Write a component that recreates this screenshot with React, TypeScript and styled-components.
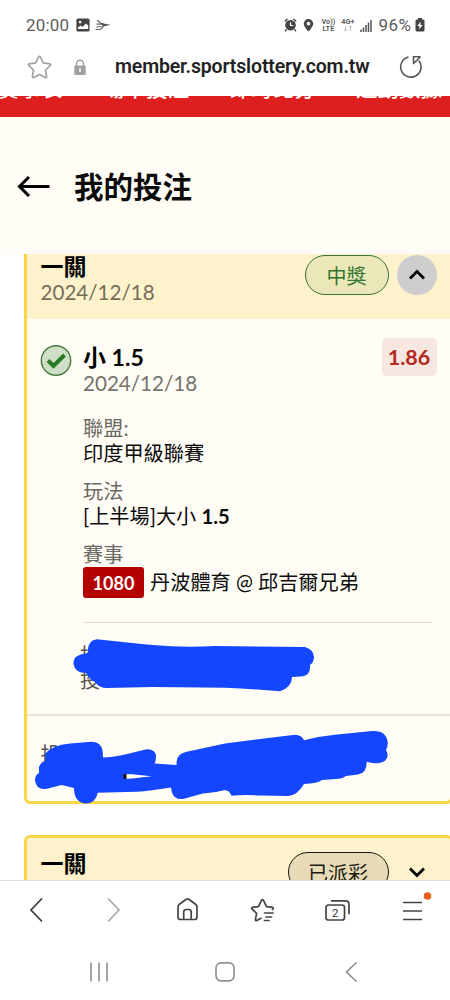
import React from "react";
import styled, { createGlobalStyle } from "styled-components";

const GlobalStyle = createGlobalStyle`
  * { box-sizing: border-box; }
  body { margin: 0; background: #fff; }
`;

const Screen = styled.div`
  width: 450px;
  height: 1000px;
  display: flex;
  flex-direction: column;
  overflow: hidden;
  background: #fff;
  color: #0b0b0b;
  font-family: Lato, "Noto Sans CJK TC", sans-serif;
`;

const StatusBar = styled.div`
  height: 50px;
  flex: none;
  display: flex;
  justify-content: space-between;
  padding: 0 25px 0 26px;
  color: #5c5c5c;
  font-family: Roboto, sans-serif;
  font-size: 17px;
  line-height: 51px;
`;

const StatusGroup = styled.div<{ $gap: number }>`
  display: flex;
  align-items: center;
  gap: ${(p) => p.$gap}px;
`;

const StatusText = styled.span<{ $spacing: number }>`
  letter-spacing: ${(p) => p.$spacing}px;
  font-weight: 400;
`;

const Network = styled.span<{ $size: number }>`
  display: flex;
  flex-direction: column;
  align-items: center;
  font-size: ${(p) => p.$size}px;
  font-weight: 700;
  line-height: 7px;
`;

const AddressBar = styled.div`
  height: 46px;
  flex: none;
  display: flex;
  align-items: center;
  padding: 0 27px 12px 27px;
`;

const Url = styled.span`
  width: 256px;
  margin-left: 29px;
  color: #222;
  font-family: Roboto, sans-serif;
  font-size: 19.5px;
  font-weight: 600;
  line-height: 30px;
  white-space: nowrap;
  letter-spacing: -0.15px;
`;

const Reload = styled.svg`
  margin-left: auto;
`;

const SiteMenu = styled.div`
  height: 21px;
  flex: none;
  display: flex;
  align-items: flex-end;
  overflow: hidden;
  background: #de1f20;
  padding-bottom: 15px;
`;

const SiteMenuItems = styled.div`
  display: flex;
  gap: 40.5px;
  margin-left: -2px;
  color: #fff;
  font-size: 21.5px;
  font-weight: 500;
  line-height: 28px;
  white-space: nowrap;
`;

const PageHeader = styled.header`
  height: 137px;
  flex: none;
  display: flex;
  align-items: center;
  gap: 23px;
  padding: 2px 0 0 17px;
  background: #fffdf5;
`;

const PageTitle = styled.h1`
  margin: 0;
  font-size: 29.5px;
  font-weight: 700;
  line-height: 40px;
`;

const Content = styled.main`
  position: relative;
  height: 626px;
  flex: none;
  overflow: hidden;
`;

const TicketList = styled.div`
  display: flex;
  flex-direction: column;
  gap: 31px;
  width: 429px;
  margin: -16px 0 0 23.5px;
`;

const Ticket = styled.section`
  height: 566px;
  flex: none;
  border: 3px solid #f8d648;
  border-radius: 6px;
  background: #fffdf5;
  overflow: hidden;
`;

const TicketHead = styled.div`
  height: 78px;
  display: flex;
  align-items: flex-start;
  padding: 12px 13px 0 14px;
  background: #fef2cc;
`;

const Titles = styled.div<{ $tone: string }>`
  display: flex;
  flex-direction: column;
  flex: 1;
  line-height: 26px;
  color: ${(p) => p.$tone};
  font-size: 20.6px;
`;

const Title = styled.strong`
  color: #000;
  font-size: 23px;
  font-weight: 700;
`;

const Pill = styled.span<{ $w: number; $color: string; $bg: string }>`
  width: ${(p) => p.$w}px;
  height: 40px;
  margin-top: 1.5px;
  border: 1.5px solid ${(p) => p.$color};
  border-radius: 20px;
  background: ${(p) => p.$bg};
  color: ${(p) => p.$color};
  font-size: 20px;
  line-height: 40px;
  text-align: center;
`;

const Toggle = styled.span<{ $bg: string }>`
  width: 40px;
  height: 40px;
  margin: 1.5px 0 0 8px;
  display: grid;
  place-items: center;
  border-radius: 50%;
  background: ${(p) => p.$bg};
`;

const TicketBody = styled.div`
  height: 397px;
  display: flex;
  padding: 24.5px 14px 0 13px;
  border-bottom: 2px solid #eae7e1;
`;

const Details = styled.div`
  flex: 1;
  margin-left: 11.5px;
  padding-right: 3px;
`;

const SelectionRow = styled.div`
  display: flex;
  align-items: flex-start;
  margin-right: -4px;
`;

const Odds = styled.span`
  width: 55px;
  height: 38px;
  margin-top: -5.5px;
  border-radius: 5px;
  background: #f7e7e1;
  color: #b52a20;
  font-size: 21.5px;
  font-weight: 700;
  line-height: 39px;
  text-align: center;
`;

const Fields = styled.dl`
  margin: 20.5px 0 0;
  padding-bottom: 24px;
  border-bottom: 1px solid #dfdcd7;
  font-size: 20.2px;
  line-height: 25px;
  white-space: nowrap;
`;

const Label = styled.dt`
  color: #6b6964;
`;

const Value = styled.dd`
  margin: 0 0 13px;
  color: #0b0b0b;
`;

const MatchRow = styled.dd`
  margin: 0;
  height: 31px;
  display: flex;
  align-items: center;
  gap: 6px;
`;

const MatchNumber = styled.span`
  width: 61px;
  height: 31px;
  border-radius: 3px;
  background: #b50000;
  color: #fff;
  font-size: 18px;
  font-weight: 700;
  line-height: 32px;
  text-align: center;
`;

const Meta = styled.div`
  margin: 20px 0 0 -3px;
  color: #57554f;
  font-size: 20px;
  line-height: 25px;
`;

const TicketFoot = styled.div`
  padding: 25px 14px;
  color: #57554f;
  font-size: 20.3px;
  line-height: 26px;
`;

const Marker = styled.svg`
  position: absolute;
  inset: 0;
`;

const BrowserBar = styled.nav`
  height: 60px;
  flex: none;
  border-top: 1px solid #dedede;
  display: flex;
  align-items: center;
  justify-content: space-between;
  padding: 0 17px;
`;

const SystemBar = styled.nav`
  height: 60px;
  flex: none;
  display: flex;
  align-items: center;
  justify-content: space-between;
  padding: 4px 79px 0;
`;

const Chevron = ({ d }: { d: string }) => (
  <svg width="20" height="20" viewBox="0 0 20 20" fill="none" stroke="#000" strokeWidth="2.8">
    <path d={d} />
  </svg>
);

export default function App() {
  return (
    <Screen>
      <GlobalStyle />
      <StatusBar>
        <StatusGroup $gap={7}>
          <StatusText $spacing={0.2}>20:00</StatusText>
          <svg width="14" height="14" viewBox="0 0 14 14">
            <path fillRule="evenodd" fill="#444" d="M2 0.5h10a1.6 1.6 0 0 1 1.6 1.6v9.8a1.6 1.6 0 0 1-1.6 1.6H2a1.6 1.6 0 0 1-1.6-1.6V2.100A1.600 1.600 0 0 1 2 .5zM2 11h10.200V7.600L9.800 5.600 6.500 9 4.600 7.400 2 9.600zM3 3v2.200h2.200V3z" />
          </svg>
          <svg width="16" height="12" viewBox="0 0 16 12" fill="none" stroke="#666" strokeWidth="1.200" style={{ marginLeft: -2 }}>
            <path d="M2 1.200l3.500 2.800 4 1.500M1.500 5.200h6M.5 10.500h4.500l3.500-3M1.500 8l5-.5" />
            <path d="M6.500 4.200l9 1.600-8 2z" fill="#555" stroke="none" />
          </svg>
        </StatusGroup>
        <StatusGroup $gap={6}>
          <svg width="13" height="14" viewBox="0 0 13 14">
            <circle cx="6.500" cy="7.300" r="5.300" fill="#444" />
            <path d="M.8 3.500L3.500 1M12.200 3.500L9.500 1M2.500 11.500L1 13.200M10.500 11.500l1.500 1.700" stroke="#444" strokeWidth="1.500" />
            <path d="M6.500 4.300v3.200h2.700" fill="none" stroke="#fff" strokeWidth="1.200" />
          </svg>
          <svg width="11" height="14" viewBox="0 0 11 14" style={{ marginRight: 1 }}>
            <path fill="#444" fillRule="evenodd" d="M5.500 1a4.700 4.700 0 0 1 4.700 4.700c0 3.200-4.700 7.800-4.700 7.800S.8 8.900.8 5.700A4.700 4.700 0 0 1 5.500 1zm0 2.700a1.900 1.900 0 1 0 0 3.800 1.900 1.900 0 0 0 0-3.800z" />
          </svg>
          <Network $size={7.3}>
            <span>Vo))</span>
            <span>LTE</span>
          </Network>
          <Network $size={7.3}>
            <span>4G+</span>
            <svg width="10" height="7" viewBox="0 0 10 7" fill="none" stroke="#bbb">
              <path d="M2.500 1v5M.8 4.300l1.700 1.700 1.700-1.700M7.500 6V1M5.800 2.700L7.500 1l1.700 1.700" />
            </svg>
          </Network>
          <svg width="12" height="13" viewBox="0 0 12 13" stroke="#555" strokeWidth="1.500">
            <path d="M1 13v-2.500M3.500 13V8.500M6 13V6M8.500 13V3.500M11 13V1" />
          </svg>
          <StatusGroup $gap={3.5}>
            <StatusText $spacing={0.5}>96%</StatusText>
            <svg width="10" height="14" viewBox="0 0 10 14">
              <rect x="3" y="0" width="4" height="3" fill="#444" />
              <rect x=".5" y="1.500" width="9" height="12" rx="1.500" fill="#444" />
              <path d="M5.800 3.500L2.300 8h2.200l-.6 3.500L7.700 7H5.300z" fill="#fff" />
            </svg>
          </StatusGroup>
        </StatusGroup>
      </StatusBar>

      <AddressBar>
        <svg width="25" height="24" viewBox="0 0 25 24" fill="none" stroke="#a2a2a2" strokeWidth="1.700" strokeLinejoin="round">
          <path d="M11.700 1.800q.8-1 1.600 0l3 6 6.600 1q1.400.4.400 1.500l-4.800 4.700 1.100 6.600q0 1.500-1.300 1l-5.800-3.100-5.800 3.100q-1.300.5-1.300-1l1.100-6.600L1.700 10.300q-1-1.100.4-1.500l6.600-1z" />
        </svg>
        <svg width="12" height="17" viewBox="0 0 12 17" style={{ marginLeft: 22 }}>
          <path d="M2.500 8V4.700a3.500 3.500 0 0 1 7 0V8" fill="none" stroke="#a0a0a0" strokeWidth="1.500" />
          <rect x=".3" y="6.500" width="11.400" height="9.500" rx="1.300" fill="#a0a0a0" />
          <path d="M6 9.500v3.500" stroke="#fff" strokeWidth="1.500" />
        </svg>
        <Url>member.sportslottery.com.tw</Url>
        <Reload width="24" height="24" viewBox="0 0 24 24" fill="none" stroke="#555" strokeWidth="1.600">
          <path d="M9.500 2A10.200 10.200 0 1 0 19.800 5.500M13.700 1.800h8M14.500 1.800v7.500M14.500 8.500L20.800 2.500" />
        </Reload>
      </AddressBar>

      <SiteMenu>
        <SiteMenuItems>
          <span>賽事表</span>
          <span>場中投注</span>
          <span>即時比分</span>
          <span>運動數據</span>
        </SiteMenuItems>
      </SiteMenu>

      <PageHeader>
        <svg width="34" height="24" viewBox="0 0 34 24" fill="none" stroke="#000" strokeWidth="3">
          <path d="M12 2L2.500 11.500 12 21M3 11.500h29.500" />
        </svg>
        <PageTitle>我的投注</PageTitle>
      </PageHeader>

      <Content>
        <TicketList>
          <Ticket>
            <TicketHead>
              <Titles $tone="#756d58">
                <Title>一關</Title>
                <span>2024/12/18</span>
              </Titles>
              <Pill $w={84} $color="#35752f" $bg="#ebe7b9">中獎</Pill>
              <Toggle $bg="#cfcecf">
                <Chevron d="M3 13.500l7-7 7 7" />
              </Toggle>
            </TicketHead>
            <TicketBody>
              <svg width="32" height="32" viewBox="0 0 32 32" fill="none">
                <circle cx="16" cy="16.500" r="14.700" fill="#cfdfc7" stroke="#447a3c" strokeWidth="1.400" />
                <path d="M8 16.500l5.500 5.500L24.500 11" stroke="#2a7a25" strokeWidth="4" />
              </svg>
              <Details>
                <SelectionRow>
                  <Titles $tone="#75736e">
                    <Title>小 1.5</Title>
                    <span>2024/12/18</span>
                  </Titles>
                  <Odds>1.86</Odds>
                </SelectionRow>
                <Fields>
                  <Label>聯盟:</Label>
                  <Value>印度甲級聯賽</Value>
                  <Label>玩法</Label>
                  <Value>
                    [上半場]大小 <b>1.5</b>
                  </Value>
                  <Label>賽事</Label>
                  <MatchRow>
                    <MatchNumber>1080</MatchNumber>
                    <span>丹波體育 @ 邱吉爾兄弟</span>
                  </MatchRow>
                </Fields>
                <Meta>
                  <div>投</div>
                  <div>投</div>
                </Meta>
              </Details>
            </TicketBody>
            <TicketFoot>投注</TicketFoot>
          </Ticket>
          <Ticket>
            <TicketHead>
              <Titles $tone="#756d58">
                <Title>一關</Title>
                <span>2024/12/18</span>
              </Titles>
              <Pill $w={101} $color="#1b1810" $bg="#e6dbb6">已派彩</Pill>
              <Toggle $bg="transparent">
                <Chevron d="M3 6.500l7 7 7-7" />
              </Toggle>
            </TicketHead>
          </Ticket>
        </TicketList>
        <Marker width="450" height="626" viewBox="0 254 450 626" fill="#1546ff">
          <path d="M97 639.300C115 641 135 643.500 153 645Q183 648 215 646L305 647Q313 649 314 657Q314 662 310 665Q311 676 301 676.500L292 677Q292 687 280 691.300Q255 689 225 687.700L153 687L107 688Q99 688 95 682Q90 680 86 673Q75 673 73.500 664Q73 655 85 653.500L88 653Q87 640 97 639.300Z" />
          <path
            fillRule="evenodd"
            d="M45 754Q52 745 70 743.500L91.700 741.700Q102 742 102.700 752L103 757.500Q112 757.500 125 754.500L146.700 749.300Q156 749 156 757Q156 761 154.500 763.500L176.700 765Q175 754 186.700 751.700L225 743.500L295 734.700Q302 735 304 740.300Q320 736 335 734.700L372 731Q386 730 387.700 742Q388 747 386 750Q390 757 384 761.500Q378 765 366.700 761.700Q367 773 358 774.500L346 776Q342 779 336 779L322 780Q318 783.500 304 784Q297 796 288 796L260 795.500Q245 794.500 231.700 795.700L229 791.500L225 790Q215 793 203 793.500L183 799Q174 800 171.700 791.700L171 787.500Q150 791 137 791.700L97.700 792.700Q96 803.500 85 803.500Q74 802 74 788L61.700 785L46 789Q36 790 35 780Q35 775 39 773V767Q40 763 45 761ZM124 774V779L132 778.500L151.700 776.300L132 774.300Z"
          />
          <rect x="123.500" y="774" width="3" height="5" fill="#111" />
        </Marker>
      </Content>

      <BrowserBar>
        <svg width="38" height="30" viewBox="17 896 38 30" fill="none" stroke="#3a3a3a" strokeWidth="1.700">
          <path d="M42 898.500L31 910l11 11.500" />
        </svg>
        <svg width="38" height="30" viewBox="93 896 38 30" fill="none" stroke="#a8a8a8" strokeWidth="1.700">
          <path d="M108 898.500L119 910l-11 11.500" />
        </svg>
        <svg width="38" height="30" viewBox="168 896 38 30" fill="none" stroke="#444" strokeWidth="1.700" strokeLinejoin="round">
          <path d="M178 906.500q0-1 .8-1.700l7.400-5.500q1.300-.8 2.600 0l7.400 5.500q.8.700.8 1.700v10.500q0 2.500-2.500 2.500h-14q-2.500 0-2.500-2.500zM183.700 919.500v-7.500q0-2.500 2.500-2.500h2.500q2.500 0 2.500 2.500v7.500" />
        </svg>
        <svg width="38" height="30" viewBox="244 896 38 30" fill="none" stroke="#444" strokeWidth="1.700" strokeLinejoin="round" strokeLinecap="round">
          <path d="M272.500 909.500l.6-.9q.4-1-.6-1.200l-6-.8-3-6.300q-1-1.500-2 0l-3 6.300-6 .8q-1.400.4-.5 1.500l4.600 4.500-1.200 6.200q0 1.500 1.300 1l4.300-2.300M264.500 913h8.500M266 917h5.500M264.500 920.500h4.500" />
        </svg>
        <svg width="38" height="30" viewBox="319.500 896 38 30" fill="none" stroke="#444" strokeWidth="1.700">
          <rect x="326.500" y="905" width="18.500" height="15" rx="2.500" />
          <path d="M331.500 900.800h14.500q3.500 0 3.500 3.500v10" />
          <text x="335.700" y="916.500" textAnchor="middle" fontFamily="Roboto, sans-serif" fontSize="11.500" fill="#333" stroke="none">2</text>
        </svg>
        <svg width="38" height="42" viewBox="395 889 38 42" fill="none" stroke="#444" strokeWidth="1.700">
          <path d="M403 901.500h19M403 910h19M403 918.500h19" />
          <circle cx="427.500" cy="895" r="3.800" fill="#e5601f" stroke="none" />
        </svg>
      </BrowserBar>

      <SystemBar>
        <svg width="40" height="24" viewBox="79 960 40 24" stroke="#959595" strokeWidth="1.700">
          <path d="M91 962.500v19M99 962.500v19M107 962.500v19" />
        </svg>
        <svg width="40" height="24" viewBox="205 960 40 24" fill="none" stroke="#909090" strokeWidth="1.700">
          <rect x="216" y="962.800" width="18" height="18" rx="5" />
        </svg>
        <svg width="40" height="24" viewBox="331 960 40 24" fill="none" stroke="#909090" strokeWidth="1.700">
          <path d="M356.500 962.500L346.500 972l10 9.500" />
        </svg>
      </SystemBar>
    </Screen>
  );
}
